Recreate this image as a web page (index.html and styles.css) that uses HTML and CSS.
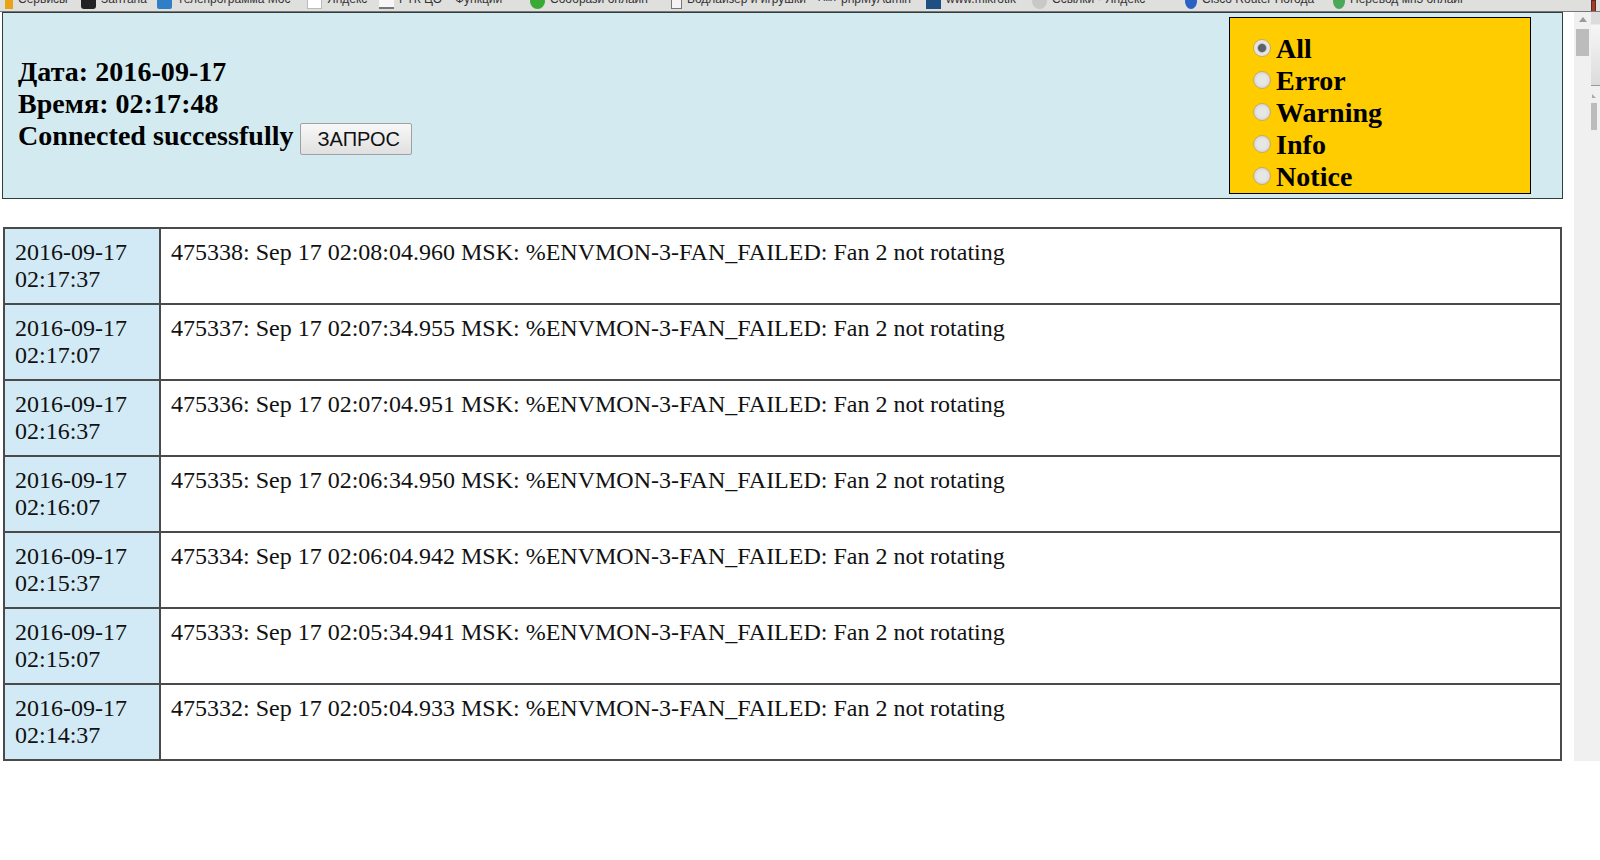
FILE: index.html
```html
<!DOCTYPE html>
<html lang="ru">
<head>
<meta charset="utf-8">
<title>Log</title>
<link rel="stylesheet" href="styles.css">
</head>
<body>
<nav class="bookmarks">
  <span class="bm w1"><i class="ico apps"></i>Сервисы</span>
  <span class="bm w2"><i class="ico black"></i>Зантана</span>
  <span class="bm w3"><i class="ico blue"></i>Телепрограмма Мос</span>
  <span class="bm w4"><i class="ico yandex"></i>Яндекс</span>
  <span class="bm w5"><i class="ico white"></i>РТК ЦО</span>
  <span class="bm w6">Функции</span>
  <span class="bm w7"><i class="ico green"></i>Сообрази онлайн</span>
  <span class="bm w8"><i class="ico doc"></i>Бодлайзер и игрушки</span>
  <span class="bm w9"><i class="ico pma">PMA</i>phpMyAdmin</span>
  <span class="bm w10"><i class="ico navy"></i>www.mikrotik</span>
  <span class="bm w11"><i class="ico gray"></i>Ссылки - Яндекс</span>
  <span class="bm w12"><i class="ico shield"></i>Cisco Router Погода</span>
  <span class="bm w13"><i class="ico globe"></i>Перевод мп3 онлайн</span>
  <span class="closebtn"></span>
</nav>
<div class="page">
  <main class="content">
    <header class="top">
      <div class="info">
        <div>Дата: 2016-09-17</div>
        <div>Время: 02:17:48</div>
        <div>Connected successfully <button class="query">ЗАПРОС</button></div>
      </div>
      <form class="levels">
        <label class="level"><input type="radio" name="l" checked>All</label>
        <label class="level"><input type="radio" name="l">Error</label>
        <label class="level"><input type="radio" name="l">Warning</label>
        <label class="level"><input type="radio" name="l">Info</label>
        <label class="level"><input type="radio" name="l">Notice</label>
      </form>
    </header>
    <table class="log">
      <tr><td class="ts">2016-09-17 02:17:37</td><td class="msg">475338: Sep 17 02:08:04.960 MSK: %ENVMON-3-FAN_FAILED: Fan 2 not rotating</td></tr>
      <tr><td class="ts">2016-09-17 02:17:07</td><td class="msg">475337: Sep 17 02:07:34.955 MSK: %ENVMON-3-FAN_FAILED: Fan 2 not rotating</td></tr>
      <tr><td class="ts">2016-09-17 02:16:37</td><td class="msg">475336: Sep 17 02:07:04.951 MSK: %ENVMON-3-FAN_FAILED: Fan 2 not rotating</td></tr>
      <tr><td class="ts">2016-09-17 02:16:07</td><td class="msg">475335: Sep 17 02:06:34.950 MSK: %ENVMON-3-FAN_FAILED: Fan 2 not rotating</td></tr>
      <tr><td class="ts">2016-09-17 02:15:37</td><td class="msg">475334: Sep 17 02:06:04.942 MSK: %ENVMON-3-FAN_FAILED: Fan 2 not rotating</td></tr>
      <tr><td class="ts">2016-09-17 02:15:07</td><td class="msg">475333: Sep 17 02:05:34.941 MSK: %ENVMON-3-FAN_FAILED: Fan 2 not rotating</td></tr>
      <tr><td class="ts">2016-09-17 02:14:37</td><td class="msg">475332: Sep 17 02:05:04.933 MSK: %ENVMON-3-FAN_FAILED: Fan 2 not rotating</td></tr>
    </table>
  </main>
  <aside class="scroll">
    <div class="arrow"></div>
    <div class="thumb"></div>
    <div class="outer">
      <div class="panel"></div>
      <div class="arrow2"></div>
      <div class="thumb2"></div>
    </div>
  </aside>
</div>
</body>
</html>
```
FILE: styles.css
```css
html, body { margin: 0; padding: 0; background: #fff; overflow: hidden; }
body { font-family: "Liberation Serif", serif; color: #111; height: 860px; }

.bookmarks { position: relative; display: flex; align-items: flex-end; height: 12px; overflow: hidden; box-sizing: border-box; padding: 0 0 8px 5px; background: #dfdfdd; border-bottom: 1px solid #777; font-family: "Liberation Sans", sans-serif; font-size: 12px; line-height: 14px; color: #333; white-space: nowrap; }
.bm { display: flex; align-items: flex-end; gap: 5px; flex: none; overflow: hidden; height: 20px; margin-bottom: -8px; padding-bottom: 5px; box-sizing: border-box; }
.w1 { width: 76px; }
.w2 { width: 76px; }
.w3 { width: 150px; }
.w4 { width: 72px; }
.w5 { width: 76px; }
.w6 { width: 75px; }
.w7 { width: 141px; }
.w8 { width: 147px; }
.w9 { width: 108px; }
.w10 { width: 106px; }
.w11 { width: 153px; }
.w12 { width: 148px; }
.w13 { width: 130px; }
.ico { display: block; flex: none; width: 15px; height: 15px; margin-bottom: -3px; font-style: normal; }
.apps { width: 8px; background: #e8a317; }
.black { background: #222; border-radius: 3px; }
.blue { background: #2f7fc8; border-radius: 2px; }
.yandex { background: #fff; border: 1px solid #bbb; box-sizing: border-box; }
.white { background: #f7f7f7; border-bottom: 2px solid #777; box-sizing: border-box; }
.green { background: #3ba935; border-radius: 50%; }
.doc { width: 11px; background: #f4f4f4; border: 1px solid #777; box-sizing: border-box; }
.pma { width: 18px; font-size: 8px; line-height: 8px; color: #345; font-weight: bold; margin-bottom: -4px; }
.navy { background: #1f4f82; }
.gray { background: #c8c8c8; border-radius: 50%; }
.shield { width: 12px; background: #2a62c4; border-radius: 50%; }
.globe { width: 12px; background: #4aa85a; border-radius: 50%; }
.closebtn { position: absolute; right: 4px; top: 0; width: 5px; height: 18px; background: #a33a2a; border: 1px solid #5a2a22; box-sizing: border-box; }

.page { display: flex; align-items: flex-start; height: 749px; }
.content { width: 1574px; box-sizing: border-box; padding: 0 11px 0 2px; }
.top { display: flex; justify-content: space-between; align-items: flex-start; box-sizing: border-box; height: 187px; background: #d3ebf0; border: 1px solid #2f3d3d; padding: 4px 31px 0 15px; }
.info { align-self: center; margin-top: -4px; font-size: 28px; font-weight: bold; line-height: 32px; letter-spacing: .05px; color: #000; }
.query { box-sizing: border-box; font-family: "Liberation Sans", sans-serif; font-size: 20px; letter-spacing: 0; width: 112px; height: 32px; margin-left: -1px; padding: 1px 0 0 6px; color: #111; background: linear-gradient(#f8f8f8, #e0e0e0); border: 1px solid #a0a0a0; border-radius: 2px; vertical-align: middle; }
.levels { box-sizing: border-box; width: 302px; height: 177px; background: #fc0; border: 1px solid #000; padding: 15px 0 0 23px; display: flex; flex-direction: column; font-size: 28px; font-weight: bold; line-height: 32px; letter-spacing: .05px; color: #000; }
.level { display: flex; align-items: center; }
.level input { appearance: none; box-sizing: border-box; flex: none; margin: -2px 5px 0 0; width: 18px; height: 18px; border-radius: 50%; background: radial-gradient(circle, #e6e6e6 0 5px, #d6d6d6 8px); border: 1px solid #c8ac58; }
.level input:checked { background: radial-gradient(circle, #5f5f68 0 3.5px, #e4e4e4 5px); }

.log { width: 1559px; margin: 28px 0 0 1px; border-collapse: collapse; border: 2px solid #3a3a3a; font-size: 24px; line-height: 27px; }
.log td { height: 76px; box-sizing: border-box; border: 2px solid #4a4a4a; padding: 10px 9px 10px 10px; vertical-align: top; }
.ts { width: 156px; background: #d2eaf5; }

.scroll { position: relative; width: 26px; height: 749px; background: #f0f0f0; flex: none; padding: 5px 0 0 2px; box-sizing: border-box; }
.arrow { width: 0; height: 0; margin: 0 0 7px 3px; border: 4px solid transparent; border-top: 0; border-bottom: 5px solid #9a9a9a; }
.thumb { width: 13px; height: 27px; background: #bcbcbc; }
.outer { position: absolute; left: 17px; top: 0; width: 9px; height: 749px; }
.panel { height: 73px; background: linear-gradient(#dcdcdc 0 12px, #f6f6f6 13px, #dcdcdc); border-bottom: 1px solid #999; box-sizing: content-box; }
.arrow2 { width: 0; height: 0; margin: 8px 0 5px 1px; border-left: 4px solid #aaa; border-top: 4px solid transparent; border-bottom: 0; }
.thumb2 { width: 6px; height: 27px; background: #bcbcbc; }
```
